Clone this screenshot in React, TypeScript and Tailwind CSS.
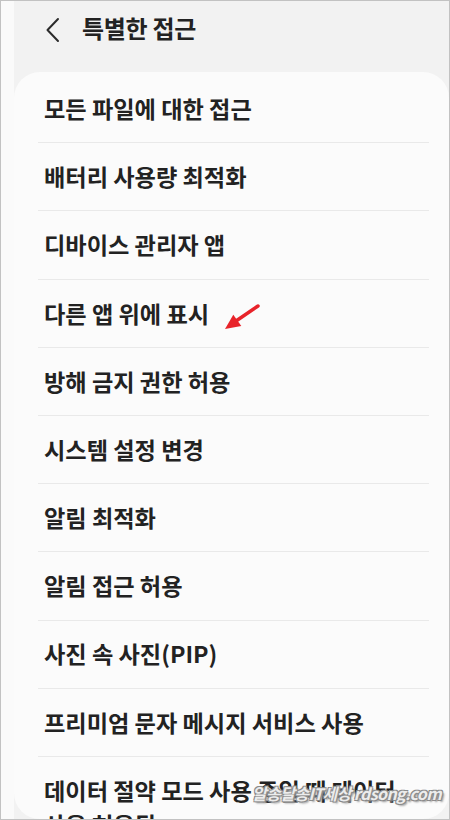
import React from "react";

const items = [
  "모든 파일에 대한 접근",
  "배터리 사용량 최적화",
  "디바이스 관리자 앱",
  "다른 앱 위에 표시",
  "방해 금지 권한 허용",
  "시스템 설정 변경",
  "알림 최적화",
  "알림 접근 허용",
  "사진 속 사진(PIP)",
  "프리미엄 문자 메시지 서비스 사용",
];

const font = { fontFamily: '"Noto Sans CJK KR", "Noto Sans", sans-serif' };

export default function App() {
  return (
    <div
      className="w-[450px] h-[820px] border border-[#c2c2c2] flex overflow-hidden bg-[#f2f2f2] text-[#222]"
      style={font}
    >
      {/* left white strip */}
      <div className="w-[13px] shrink-0 bg-[#fafafa]" />

      <div className="flex-1 flex flex-col min-w-0">
        {/* Header */}
        <div className="h-[71px] shrink-0 flex items-center">
          <svg className="ml-[31px] w-[16px] h-[26px] mb-[13px]" viewBox="0 0 16 26" fill="none">
            <path d="M13 2 L2.5 13 L13 24" stroke="#2b2b2b" strokeWidth="2" strokeLinecap="round" strokeLinejoin="round" />
          </svg>
          <h1 className="ml-[21px] text-[24px] font-bold tracking-[-0.3px] leading-none mb-[17px]">
            특별한 접근
          </h1>
        </div>

        {/* Card */}
        <div className="relative flex-1 bg-[#fbfbfb] rounded-[26px] overflow-hidden pt-[3px]">
          {items.map((label) => (
            <div key={label}>
              <div className="h-[67.2px] flex items-center pl-[30px]">
                <span className="text-[23.2px] font-bold leading-none">{label}</span>
              </div>
              <div className="h-px bg-[#e9e9e9] ml-[24px] mr-[20px]" />
            </div>
          ))}
          <div className="pl-[30px] pr-[40px] pt-[16px]">
            <span className="text-[23.2px] font-bold leading-[34px]">
              데이터 절약 모드 사용 중일 때 데이터 사용 허용됨
            </span>
          </div>

          {/* red arrow */}
          <svg className="absolute left-[205px] top-[228px] w-[45px] h-[35px]" viewBox="0 0 45 35">
            <line x1="39" y1="6" x2="17" y2="21" stroke="#e8232a" strokeWidth="3.5" strokeLinecap="round" />
            <polygon points="6,29 14.3,14.7 22.3,26.1" fill="#e8232a" />
          </svg>

          {/* watermark */}
          <div
            className="absolute left-[238px] top-[709px] text-[16px] font-bold italic text-[#ececec] whitespace-nowrap tracking-[-0.6px] [text-shadow:1px_1px_0_#8a8a8a,-1px_-1px_0_#8a8a8a,1px_-1px_0_#8a8a8a,-1px_1px_0_#8a8a8a,2px_2px_2px_#999]"
          >
            알송달송IT세상 rdsong.com
          </div>
        </div>
      </div>
    </div>
  );
}
